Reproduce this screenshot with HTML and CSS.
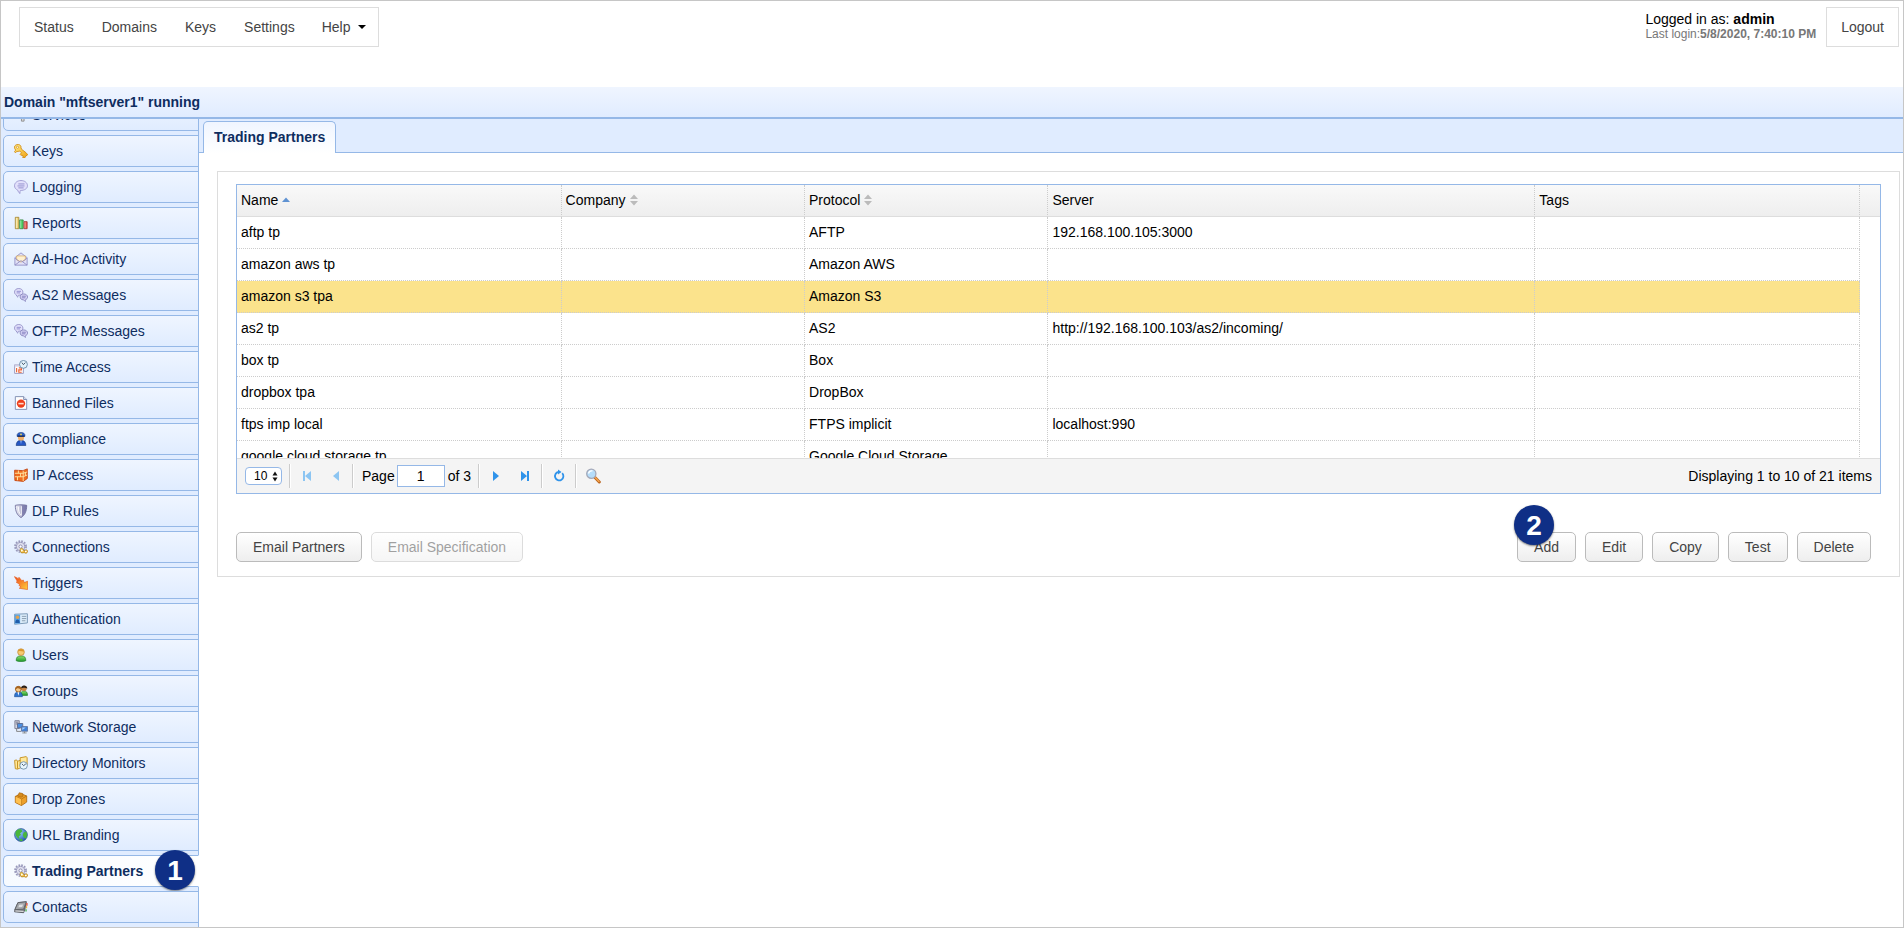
FILE: index.html
```html
<!DOCTYPE html>
<html lang="en">
<head>
<meta charset="utf-8">
<title>Trading Partners</title>
<link rel="stylesheet" href="styles.css">
</head>
<body>
<svg class="defs" aria-hidden="true">
  <defs>
    <linearGradient id="gold" x1="0" y1="0" x2="1" y2="1"><stop offset="0" stop-color="#fff08a"/><stop offset="1" stop-color="#f0a010"/></linearGradient>
    <linearGradient id="fire" x1="0" y1="0" x2="1" y2="1"><stop offset="0" stop-color="#f0431c"/><stop offset="1" stop-color="#ffd23c"/></linearGradient>
    <linearGradient id="steel" x1="0" y1="0" x2="1" y2="0"><stop offset="0" stop-color="#f4f4fb"/><stop offset="1" stop-color="#7f80ad"/></linearGradient>
    <linearGradient id="green" x1="0" y1="0" x2="0" y2="1"><stop offset="0" stop-color="#8fe06f"/><stop offset="1" stop-color="#1f9a2c"/></linearGradient>
    <radialGradient id="sea" cx=".35" cy=".3" r=".8"><stop offset="0" stop-color="#9fd4ff"/><stop offset="1" stop-color="#174fa8"/></radialGradient>
    <symbol id="i-bubble" viewBox="0 0 16 16"><path d="M8 .6C4 .6.6 3 .6 6.600c0 2.400 1.500 4 3.600 4.900.5 1.500 1 2.800 2.700 4-.3-1.500-.2-2.500.5-3.600C12 12 15.400 9.800 15.400 6.600 15.400 3 12 .6 8 .6z" fill="#e2e0fb" stroke="#9a97cf"/><path d="M5 4.500h7M4 6.800h8M5 9h6" stroke="#8a87ca"/></symbol>
    <symbol id="i-bubbles" viewBox="0 0 16 16"><path d="M5.500.6C2.500.6.6 2.300.6 4.700c0 1.500.8 2.500 2 3.200.2 1.200.8 2 1.800 2.600 0-1 0-1.600.5-2.200 3 .2 5.300-1.200 5.300-3.600S8.300.6 5.500.6z" fill="#e2e0fb" stroke="#9290c6"/><path d="M3 3.800h5M3 5.600h4" stroke="#8a87ca"/><path d="M11 6.800C8.500 6.800 7 8.200 7 10.200s1.600 3.200 3.500 3.300c1 0 1.500 1.300 2.500 2 .1-1 0-1.600.3-2.300 1.300-.5 2.200-1.400 2.200-2.800C15.500 8.300 13.700 6.800 11 6.800z" fill="#d5d3f4" stroke="#8582bb"/><path d="M9 9.400h4.600M9 11.200h4" stroke="#7f7dbd"/></symbol>
    <symbol id="i-gear" viewBox="0 0 16 16"><circle cx="7.500" cy="7.500" r="6.300" fill="none" stroke="#9999bb" stroke-width="2" stroke-dasharray="2 1.300"/><circle cx="7.500" cy="7.500" r="4.800" fill="#dfdfee" stroke="#8f8fb5"/><circle cx="7.500" cy="7.500" r="1.800" fill="#fff" stroke="#8787aa"/><path d="M7 11c0-2 3-2 3.500 0l1 1.500h1c.5-2 3-1.500 3 .5s-2.500 2.500-3.500 1.500h-1.500C8.500 15.500 7 14 7 11z" fill="url(#gold)" stroke="#a8760f" stroke-width=".8"/><circle cx="9" cy="12" r="1" fill="#fff"/><circle cx="13.500" cy="13" r="1" fill="#fff"/></symbol>
  </defs>
</svg>

<header class="top">
  <nav class="menu" aria-label="Main">
    <a href="#">Status</a><a href="#">Domains</a><a href="#">Keys</a><a href="#">Settings</a><a href="#">Help <span class="caret"></span></a>
  </nav>
  <div class="session">
    <div class="who">
      <p class="user">Logged in as: <b>admin</b></p>
      <p class="last">Last login:<b>5/8/2020, 7:40:10 PM</b></p>
    </div>
    <a class="logout" href="#">Logout</a>
  </div>
</header>
<h1 class="domain">Domain "mftserver1" running</h1>

<div class="workspace">
  <nav class="side" aria-label="Domain">
    <a href="#"><svg viewBox="0 0 16 16"><path d="M8.500 3h3v12h-3z" fill="#ddd" stroke="#888"/><path d="M12 8h3v4h-3z" fill="#c4cbe0" stroke="#77809c"/></svg>Services</a>
    <a href="#"><svg viewBox="0 0 16 16"><path d="M.6 3.500C.6 1.500 3 .4 5 .6s3.300 1.600 3 3.700l.6 1.700 5.200 4 1.900 2.300-2 1.200-1 1.900-2.700.3.500-2.200-1.500-.8L8 13l-1-1 1.500-2-2-2C4.500 9 2.500 8 1.500 10L.6 8.500 2 7C1 6 .6 5 .6 3.500z" fill="url(#gold)" stroke="#d18a12"/><circle cx="4" cy="3.700" r="1.200" fill="#fff" stroke="#c98312" stroke-width=".7"/></svg>Keys</a>
    <a href="#"><svg><use href="#i-bubble"/></svg>Logging</a>
    <a href="#"><svg viewBox="0 0 16 16"><path d="M1.500 1.500h4v13h-4z" fill="#f0d77c" stroke="#a58632"/><path d="M6.500 4.500h4v10h-4z" fill="#49cf63" stroke="#3b8a45"/><path d="M11.500 6.500h3.500v8h-3.500z" fill="#ee5548" stroke="#a33c38"/><path d="M2.700 2v12M7.700 5v9M12.600 7v7" stroke="#fff" opacity=".55"/></svg>Reports</a>
    <a href="#"><svg viewBox="0 0 16 16"><path d="M1 6.500 8 1l7 5.500V15H1z" fill="#e2e1f8" stroke="#918fc5"/><path d="M3 4.500h10V9l-5 2.500L3 9z" fill="#fff0cf" stroke="#d8a95c" stroke-width=".8"/><path d="M1 7l5.500 4L1 15M15 7l-5.500 4L15 15M6 11l2-1 2 1" fill="none" stroke="#918fc5"/></svg>Ad-Hoc Activity</a>
    <a href="#"><svg><use href="#i-bubbles"/></svg>AS2 Messages</a>
    <a href="#"><svg><use href="#i-bubbles"/></svg>OFTP2 Messages</a>
    <a href="#"><svg viewBox="0 0 16 16"><path d="M.7 5.500h10v9.800H.7z" fill="#fff" stroke="#9290b8"/><path d="M.7 5h10v2.500H.7z" fill="#cfcfe5"/><path d="M3 9v5M5.500 9h3v2.300h-3V14h3.300" fill="none" stroke="#ed6030" stroke-width="1.300"/><circle cx="10.800" cy="5" r="4.500" fill="#e2f2fb" stroke="#6486a3"/><path d="M9 3l1.800 2.300L13 3" fill="none" stroke="#33455c"/></svg>Time Access</a>
    <a href="#"><svg viewBox="0 0 16 16"><path d="M1.500.7h9.500L14.500 4v11.300h-13z" fill="#fff" stroke="#7685ac"/><path d="M11 .7V4h3.500" fill="#d9e0ef" stroke="#7685ac"/><circle cx="8" cy="8.700" r="4.800" fill="#ee3f1c"/><path d="M5 8.700h6" stroke="#ffd9cc" stroke-width="1.800"/></svg>Banned Files</a>
    <a href="#"><svg viewBox="0 0 16 16"><path d="M2.500 15.500c0-4 2-6 5.500-6s5.500 2 5.500 6z" fill="#2557c5" stroke="#123377" stroke-width=".7"/><circle cx="8" cy="6.500" r="3.500" fill="#f2b06a"/><path d="M3.500 5C3 2 5 .5 8 .5S13 2 12.500 5z" fill="#2c62cc" stroke="#12306e" stroke-width=".6"/><path d="M4 4.700h8" stroke="#0b1e4a" stroke-width="1.200"/><circle cx="8" cy="2.800" r="1" fill="#f6d447"/><path d="M7 10l1 4 1-4z" fill="#7ea9f1"/></svg>Compliance</a>
    <a href="#"><svg viewBox="0 0 16 16"><path d="M.7 2.500l9.500.5 5-2v11l-4.500 3.300L1 14.300z" fill="#ef6c1e" stroke="#c4440f"/><path d="M1 6h9.500l4.500-1.500M1 10h9.500L15 8M5 2.800V6M7.500 6v4M4 10v4M10.500 3v12M13 5v4" fill="none" stroke="#ffe3a1" stroke-width="1.100"/></svg>IP Access</a>
    <a href="#"><svg viewBox="0 0 16 16"><path d="M1.500 1.500c4-.8 9-.8 13 0C14.500 8 12.500 13 8 15.500 3.500 13 1.500 8 1.500 1.500z" fill="url(#steel)" stroke="#6f6f9c"/><path d="M5 3c0 4 .5 7 3 10M8.500 2.500V13" stroke="#fff" fill="none"/><path d="M9 1.500h5.300C14 8 12 12 9 14.500z" fill="#7374a6" opacity=".7"/></svg>DLP Rules</a>
    <a href="#"><svg><use href="#i-gear"/></svg>Connections</a>
    <a href="#"><svg viewBox="0 0 16 16"><path d="M.5.7 5 3l.7-1.500L9 5.500l1.500-1 1.300 3L15.500 6v9.500L6 14l2-1.500-2.500-2 1-1L2.500 7l1.200-1z" fill="url(#fire)" stroke="#e56425" stroke-width=".8"/></svg>Triggers</a>
    <a href="#"><svg viewBox="0 0 16 16"><path d="M.7 2.500 15.300 2v10.500L.7 14z" fill="#dcecfa" stroke="#6f8faf"/><path d="M1 3h6v10.300H1z" fill="#57a5ea"/><circle cx="4" cy="6" r="2" fill="#e4a14b"/><path d="M1.500 12.500c0-3 1-4 2.500-4s2.500 1 2.500 4z" fill="#215da9"/><path d="M9 5h5M9 7.500h5M9 10h4" stroke="#8195a9"/></svg>Authentication</a>
    <a href="#"><svg viewBox="0 0 16 16"><path d="M2.500 14.500C2.500 10.500 4 9 8 9s5.500 1.500 5.500 5.500c-3 1.300-8 1.300-11 0z" fill="url(#green)" stroke="#258030" stroke-width=".8"/><circle cx="8" cy="4.700" r="3.800" fill="#f6ca73" stroke="#c08226" stroke-width=".8"/><path d="M4.500 4C5 0 11 0 11.500 4 9.500 4.500 7 2.500 4.500 4z" fill="#d9962d"/></svg>Users</a>
    <a href="#"><svg viewBox="0 0 16 16"><path d="M7.500 13c0-4 1.500-5 4-5s4 1.500 4 5z" fill="url(#green)" stroke="#21722b" stroke-width=".7"/><circle cx="11.500" cy="5" r="3" fill="#c98544"/><path d="M8 5c0-4.500 7-4.500 7.300 0-2 0-4-1.500-7.300 0z" fill="#28201b"/><path d="M.6 14.500c0-4 1.400-5.500 4.400-5.500s4.600 1.500 4.600 5.500z" fill="#2f74cf" stroke="#174a90" stroke-width=".7"/><circle cx="5" cy="6" r="3.300" fill="#f5c989" stroke="#8a5118"/><path d="M1.300 7C.5 1 9.500 1 8.800 7 7 5.500 4 3 1.300 7z" fill="#a8641f"/><path d="M4 9.500l1 4 1-4z" fill="#fff"/></svg>Groups</a>
    <a href="#"><svg viewBox="0 0 16 16"><path d="M1 .8h5v9H1z" fill="#d4d6e2" stroke="#77798e"/><path d="M2 2.500h3M2 4.500h3" stroke="#6a6d83"/><path d="M4 4h6v5H4z" fill="#4a8ee0" stroke="#5a678c"/><path d="M3 10v3h5" fill="none" stroke="#777"/><path d="M8.500 7.500h7v5.300h-7z" fill="#3f83dc" stroke="#62729a"/><path d="M9.500 8.500h4l-4 3z" fill="#a6d0fb"/><path d="M9.500 14.800h5M12 13v2" stroke="#888"/></svg>Network Storage</a>
    <a href="#"><svg viewBox="0 0 16 16"><path d="M.7 5 3 4.500 4 6l3-1V2l7-1.300 1 1.300v8L4 15 1.500 14.500z" fill="#ffe89a" stroke="#c18a16"/><path d="M4 6v8.500M7 4.500v8" stroke="#c18a16"/><circle cx="11" cy="10.800" r="4.300" fill="#e8f5fd" stroke="#6b8eaa"/><path d="M9 9l2 2 2.500-2" fill="none" stroke="#34495e"/></svg>Directory Monitors</a>
    <a href="#"><svg viewBox="0 0 16 16"><path d="M1.500 5 8 2l6.500 2.500v7L8.500 15.500l-7-3.500z" fill="#eda02b" stroke="#b26d10"/><path d="M1.500 5l7 3v7.500M8.500 8l6-3.500" fill="none" stroke="#b97512"/><path d="M2 5.500l6.300 2.800v6.500L2 11.600z" fill="#ffc04f"/><path d="M4 4.500 6 .8l4 1V5l-2 1z" fill="#d68b1d" stroke="#a86610" stroke-width=".7"/></svg>Drop Zones</a>
    <a href="#"><svg viewBox="0 0 16 16"><circle cx="8" cy="8" r="7.300" fill="url(#sea)" stroke="#2b5890" stroke-width=".8"/><path d="M2 4c2-3 5-3 6.500-2.300L9.500 4 7 6l1 2-2.500 1.500.5 3-2-1.500C2 9 1 7 2 4zM11 5l3-1c1.500 3 1 6-.5 8L11.500 11 10 8zM6 13l3-1 1 2.500c-1.500.5-3 .3-4-.2z" fill="#49b63c"/></svg>URL Branding</a>
    <a href="#" class="active" aria-current="page"><svg><use href="#i-gear"/></svg>Trading Partners<span class="badge badge-side">1</span></a>
    <a href="#"><svg viewBox="0 0 16 16"><path d="M4.500 3 14 2l-1.500 8.500L11 14.500l-10.300-1L1 11z" fill="#777a80" stroke="#55575c"/><path d="M4.500 3 14 2l-3 8.500L1 11z" fill="#a3a6aa" stroke="#5d5f63"/><path d="M6 5.500l4.500-.5-1.300 3-4.200.3z" fill="#dcdee0"/><path d="M1.500 12.500l9.500.5" stroke="#fff"/><path d="M14 3.500h1.500v3H14z" fill="#e5492d"/><path d="M13.500 7H15v2.500h-1.500z" fill="#f1b52e"/><path d="M13 10.500h1.500V13H13z" fill="#4bb04b"/></svg>Contacts</a>
  </nav>

  <main class="main">
    <div class="tabs"><a class="tab" href="#">Trading Partners</a></div>
    <section class="panel">
      <div class="grid">
        <div class="view">
          <table>
            <colgroup><col class="c20"><col class="c15"><col class="c15"><col class="c30"><col class="c20"></colgroup>
            <thead>
              <tr>
                <th>Name<svg class="sort" viewBox="0 0 8 12"><path d="M0 8 4 3.500 8 8z" fill="#5f92d2"/></svg></th>
                <th>Company<svg class="sort" viewBox="0 0 8 12"><path d="M0 5 4 .5 8 5zM0 7h8l-4 4.500z" fill="#bbb"/></svg></th>
                <th>Protocol<svg class="sort" viewBox="0 0 8 12"><path d="M0 5 4 .5 8 5zM0 7h8l-4 4.500z" fill="#bbb"/></svg></th>
                <th>Server</th>
                <th>Tags</th>
              </tr>
            </thead>
            <tbody>
              <tr><td>aftp tp</td><td></td><td>AFTP</td><td>192.168.100.105:3000</td><td></td></tr>
              <tr><td>amazon aws tp</td><td></td><td>Amazon AWS</td><td></td><td></td></tr>
              <tr class="selected"><td>amazon s3 tpa</td><td></td><td>Amazon S3</td><td></td><td></td></tr>
              <tr><td>as2 tp</td><td></td><td>AS2</td><td>http://192.168.100.103/as2/incoming/</td><td></td></tr>
              <tr><td>box tp</td><td></td><td>Box</td><td></td><td></td></tr>
              <tr><td>dropbox tpa</td><td></td><td>DropBox</td><td></td><td></td></tr>
              <tr><td>ftps imp local</td><td></td><td>FTPS implicit</td><td>localhost:990</td><td></td></tr>
              <tr><td>google cloud storage tp</td><td></td><td>Google Cloud Storage</td><td></td><td></td></tr>
            </tbody>
          </table>
        </div>
        <div class="pager">
          <div class="size">
            <select aria-label="Page size"><option>10</option></select>
            <svg viewBox="0 0 6 11"><path d="M.5 4.500 3 .5l2.500 4zM.5 6.500h5L3 10.500z" fill="#111"/></svg>
          </div>
          <span class="sep"></span>
          <button class="nav" disabled aria-label="First page"><svg viewBox="0 0 16 16"><path d="M4 3h2v10H4zM12 3v10L6 8z" fill="#8cc5f2"/></svg></button>
          <button class="nav" disabled aria-label="Previous page"><svg viewBox="0 0 16 16"><path d="M11 3v10L5 8z" fill="#8cc5f2"/></svg></button>
          <span class="sep"></span>
          <label class="page">Page <input type="text" value="1"></label><span>of 3</span>
          <span class="sep sep-after"></span>
          <button class="nav" aria-label="Next page"><svg viewBox="0 0 16 16"><path d="M5 3v10l6-5z" fill="#2f93ea"/></svg></button>
          <button class="nav" aria-label="Last page"><svg viewBox="0 0 16 16"><path d="M4 3v10l6-5zM10 3h2v10h-2z" fill="#2f93ea"/></svg></button>
          <span class="sep"></span>
          <button class="nav" aria-label="Refresh"><svg viewBox="0 0 16 16"><path d="M11.200 5.200A4.200 4.200 0 1 1 7.500 4" fill="none" stroke="#2f93ea" stroke-width="1.800"/><path d="M7 1.500v5l3.500-2.500z" fill="#2f93ea"/></svg></button>
          <span class="sep"></span>
          <button class="nav" aria-label="Search"><svg viewBox="0 0 16 16"><path d="M10 9.500 14.300 14" stroke="#b9631d" stroke-width="3" stroke-linecap="round"/><path d="M10.500 9.800 14 13.500" stroke="#f5a44c" stroke-width="1.500" stroke-linecap="round"/><circle cx="6.300" cy="5.800" r="4.600" fill="#b5ddfa" stroke="#a3a8b8" stroke-width="1.300"/><path d="M3.500 5.500c.5-2 2-3 4-2.600" stroke="#fff" fill="none" stroke-width="1.300"/></svg></button>
          <span class="info">Displaying 1 to 10 of 21 items</span>
        </div>
      </div>
      <div class="actions">
        <button class="btn">Email Partners</button>
        <button class="btn" disabled>Email Specification</button>
        <span class="add"><button class="btn">Add</button><span class="badge badge-add">2</span></span>
        <button class="btn">Edit</button>
        <button class="btn">Copy</button>
        <button class="btn">Test</button>
        <button class="btn">Delete</button>
      </div>
    </section>
  </main>
</div>
</body>
</html>
```

FILE: styles.css
```css
* { box-sizing: border-box; }

body {
  margin: 0;
  height: 100vh;
  display: flex;
  flex-direction: column;
  border: 1px solid #c6c6c6;
  background: #fff;
  color: #000;
  font: 14px/16px "Liberation Sans", Arial, sans-serif;
}

a { color: inherit; text-decoration: none; }
p { margin: 0; }
button, input, select { font: inherit; color: inherit; }
.defs { position: absolute; width: 0; height: 0; }

.top {
  flex: none;
  display: flex;
  justify-content: space-between;
  align-items: flex-start;
  height: 86px;
  padding: 6px 4px 0 18px;
}
.menu, .logout {
  display: flex;
  align-items: center;
  height: 40px;
  border: 1px solid #ddd;
  color: #444;
}
.menu a { display: flex; align-items: center; padding: 0 14px; }
.menu a:last-child { padding: 0 12px 0 13px; }
.caret {
  margin-left: 8px;
  border: solid transparent;
  border-width: 4px 4px 0;
  border-top-color: #000;
}
.session { display: flex; gap: 10px; }
.who { padding-top: 4px; }
.last { color: #777; font-size: 12px; line-height: 14px; }
.logout { padding: 0 14px; }

.domain {
  flex: none;
  margin: 0;
  height: 32px;
  padding-left: 3px;
  border-bottom: 2px solid #95b8e7;
  background: linear-gradient(#eff5ff, #e0ecff);
  color: #0e2d5f;
  font-size: 14px;
  line-height: 30px;
}

.workspace { flex: 1; display: flex; min-height: 0; }

.side {
  flex: none;
  width: 198px;
  display: flex;
  flex-direction: column;
  justify-content: flex-end;
  gap: 4px;
  overflow: hidden;
  padding: 0 0 4px 2px;
  background: linear-gradient(#95b8e7, #95b8e7) right / 1px 100% no-repeat #e0ecff;
}
.side a {
  position: relative;
  flex: none;
  display: flex;
  align-items: center;
  gap: 4px;
  height: 32px;
  padding-left: 10px;
  border: 1px solid #95b8e7;
  border-radius: 5px 0 0 5px;
  background: linear-gradient(#eff5ff, #e0ecff);
  color: #0e2d5f;
}
.side svg { width: 14px; height: 14px; }
.side .active {
  border-right-color: #fff;
  background: linear-gradient(90deg, #f6faff, #fff);
  font-weight: bold;
}

.badge {
  position: absolute;
  width: 40px;
  height: 40px;
  border-radius: 50%;
  background: #0f2f86;
  box-shadow: 0 1px 2px rgba(0, 0, 0, .5);
  color: #fff;
  font-size: 28px;
  font-weight: bold;
  line-height: 42px;
  text-align: center;
}
.badge-side { top: -6px; right: 3px; }
.badge-add { top: -27px; left: -3px; }

.main { flex: 1; min-width: 0; }
.tabs {
  display: flex;
  height: 34px;
  padding: 2px 0 0 4px;
  border-bottom: 1px solid #95b8e7;
  background: #e0ecff;
}
.tab {
  height: 32px;
  padding: 0 10px;
  border: 1px solid #95b8e7;
  border-bottom: 0;
  border-radius: 5px 5px 0 0;
  background: linear-gradient(#eff5ff, #fff);
  color: #0e2d5f;
  font-weight: bold;
  line-height: 31px;
}

.panel {
  margin: 18px 3px 0 18px;
  padding: 12px 18px 14px;
  border: 1px solid #ddd;
}
.grid { border: 1px solid #95b8e7; }
.view {
  height: 273px;
  overflow: hidden;
  padding-right: 20px;
  background:
    linear-gradient(#f9f9f9, #eee) 0 0 / 100% 31px no-repeat,
    linear-gradient(#ddd, #ddd) 0 31px / 100% 1px no-repeat;
}
table { width: 100%; table-layout: fixed; border-collapse: separate; border-spacing: 0; }
.c15 { width: 15%; }
.c20 { width: 20%; }
.c30 { width: 30%; }
th, td {
  height: 32px;
  padding: 0 4px 2px;
  border: 0 dotted #ccc;
  border-width: 0 1px 1px 0;
  font-weight: normal;
  text-align: left;
  white-space: nowrap;
}
th { border-bottom: 1px solid #ddd; }
.sort { width: 8px; height: 12px; margin-left: 4px; vertical-align: -1px; }
.selected td { background: #fbe38c; }

.pager {
  display: flex;
  align-items: center;
  gap: 3px;
  height: 35px;
  padding: 0 8px;
  border-top: 1px solid #ddd;
  background: #f4f4f4;
}
.size { position: relative; margin-right: 4px; }
.size select {
  display: block;
  appearance: none;
  width: 37px;
  height: 18px;
  padding: 0 0 0 8px;
  border: 1px solid #95b8e7;
  border-radius: 4px;
  background: #fff;
  font-size: 12px;
}
.size svg { position: absolute; top: 4px; right: 4px; width: 6px; height: 11px; pointer-events: none; }
.sep { width: 2px; height: 24px; border-left: 1px solid #ccc; border-right: 1px solid #fff; }
.sep-after { margin-left: 4px; }
.nav { display: flex; justify-content: center; width: 26px; padding: 0; border: 0; background: none; }
.nav svg { width: 16px; height: 16px; }
.page { display: flex; align-items: center; gap: 2px; margin-left: 5px; }
.page input {
  width: 48px;
  height: 22px;
  padding: 0;
  border: 1px solid #95b8e7;
  background: #fff;
  text-align: center;
}
.info { margin-left: auto; }

.actions { display: flex; gap: 9px; margin-top: 38px; padding-right: 10px; }
.btn {
  display: block;
  height: 30px;
  padding: 0 16px;
  border: 1px solid #bbb;
  border-radius: 5px;
  background: linear-gradient(#fff, #eee);
  color: #444;
}
.btn:disabled { opacity: .5; }
.add { position: relative; margin-left: auto; }
```
